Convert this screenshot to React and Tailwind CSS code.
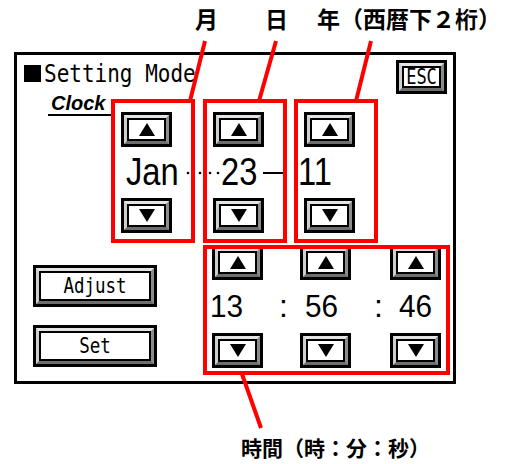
import React from 'react';

const mono = "font-['DejaVu_Sans_Mono',monospace]";
const narrow = "font-['Liberation_Sans',Arial,sans-serif]";
const cjk = "font-['Noto_Sans_CJK_JP',sans-serif]";

// double framed bevel button used all over the panel
const Bevel = ({ className = '', children }) => (
  <div className={`border-[3px] border-black ${className}`}>
    <div className="h-full border-[3px] border-t-[#e4e4e4] border-l-[#cfcfcf] border-r-[#8c8c8c] border-b-[#6e6e6e]">
      <div className="h-full border-2 border-black bg-white flex items-center justify-center">
        {children}
      </div>
    </div>
  </div>
);

const Tri = ({ down }) => (
  <svg width="16" height="13" viewBox="0 0 16 13">
    <polygon points={down ? '0,0 16,0 8,13' : '8,0 16,13 0,13'} fill="#000" />
  </svg>
);

const Arrow = ({ down }) => (
  <Bevel className="w-[51px] h-[35px]">
    <Tri down={down} />
  </Bevel>
);

const Label = ({ children }) => (
  <span className={`inline-block scale-y-[1.2] text-[17.5px] leading-[18px] ${mono}`}>{children}</span>
);

// narrow tall digits, squeezed from the left edge
const Big = ({ w, children }) => (
  <span className={`inline-block shrink-0 origin-left scale-x-[0.86] whitespace-nowrap ${w}`}>{children}</span>
);

const Clock = ({ children }) => (
  <span className="inline-block shrink-0 origin-left scale-x-[0.93] whitespace-nowrap w-[34px]">{children}</span>
);

const Panel = () => (
  <div className="w-[442px] h-[332px] border-[3px] border-black">
    {/* header */}
    <div className="h-[57px] flex justify-between">
      <div className="pl-[7px] pt-[9px]">
        <div className="flex items-start">
          <div className="w-[17px] h-[17px] mt-[1px] bg-black" />
          <span className={`ml-[3px] inline-block scale-y-[1.18] text-[21px] leading-[21px] ${mono}`}>Setting Mode</span>
        </div>
        <div className="mt-[7px] ml-[24px]">
          <span className="inline-block border-b-2 border-black pl-[3px] pr-[8px] pb-[1px] font-['Liberation_Sans',Arial,sans-serif] font-bold italic text-[20px] leading-[20px]">
            Clock
          </span>
        </div>
      </div>
      <Bevel className="w-[51px] h-[34px] mt-[5px] mr-[6px]">
        <span className={`inline-block scale-y-[1.25] text-[17px] leading-[17px] ${mono}`}>ESC</span>
      </Bevel>
    </div>

    {/* date */}
    <div className="pl-[104px] grid grid-cols-[92px_91px_51px]">
      <Arrow />
      <Arrow />
      <Arrow />
      <div className={`h-[51px] pl-[5px] flex items-center text-[38px] leading-[51px] ${narrow}`}>
        <Big w="w-[56px]">Jan</Big>
        <svg className="ml-[4px] shrink-0" width="34" height="6" viewBox="0 0 34 6">
          {[2, 14, 24, 32].map((x) => (
            <circle key={x} cx={x} cy="3" r="1.3" fill="#000" />
          ))}
        </svg>
      </div>
      <div className={`h-[51px] pl-[8px] flex items-center text-[38px] leading-[51px] ${narrow}`}>
        <Big w="w-[37px]">23</Big>
        <div className="ml-[5px] w-[24px] h-[2px] shrink-0 bg-black" />
      </div>
      <div className={`h-[51px] -ml-[6px] flex items-center text-[38px] leading-[51px] ${narrow}`}>
        <Big w="w-[30px]">11</Big>
      </div>
      <Arrow down />
      <Arrow down />
      <Arrow down />
    </div>

    {/* buttons + time */}
    <div className="flex">
      <div className="w-[195px] pl-[16px] pt-[32px] flex flex-col gap-[18px]">
        <Bevel className="w-[124px] h-[42px]">
          <Label>Adjust</Label>
        </Bevel>
        <Bevel className="w-[124px] h-[42px]">
          <Label>Set</Label>
        </Bevel>
      </div>
      <div className="pt-[12px] grid grid-cols-[88px_90px_51px]">
        <Arrow />
        <Arrow />
        <Arrow />
        <div className={`h-[53px] -ml-[2px] pr-[12px] flex justify-between text-[32px] leading-[53px] ${narrow}`}>
          <Clock>13</Clock>
          <span>:</span>
        </div>
        <div className={`h-[53px] pl-[5px] pr-[7px] flex justify-between text-[32px] leading-[53px] ${narrow}`}>
          <Clock>56</Clock>
          <span>:</span>
        </div>
        <div className={`h-[53px] pl-[9px] flex text-[32px] leading-[53px] ${narrow}`}>
          <Clock>46</Clock>
        </div>
        <Arrow down />
        <Arrow down />
        <Arrow down />
      </div>
    </div>
  </div>
);

export default function App() {
  return (
    <div className="relative w-[507px] h-[464px] bg-white overflow-hidden text-black">
      <div className="pt-[52px] pl-[14px]">
        <Panel />
      </div>

      {/* annotation layer */}
      <div className="absolute left-[111px] top-[99px] w-[84px] h-[144px] border-4 border-[#ff0000]" />
      <div className="absolute left-[203px] top-[99px] w-[84px] h-[144px] border-4 border-[#ff0000]" />
      <div className="absolute left-[294px] top-[99px] w-[84px] h-[144px] border-4 border-[#ff0000]" />
      <div className="absolute left-[203px] top-[245px] w-[247px] h-[130px] border-4 border-[#ff0000]" />

      <svg className="absolute inset-0 pointer-events-none" width="507" height="464">
        <g stroke="#ff0000" strokeWidth="4">
          <line x1="205" y1="41" x2="190" y2="101" />
          <line x1="276" y1="41" x2="259" y2="101" />
          <line x1="371" y1="41" x2="356" y2="101" />
          <line x1="242" y1="374" x2="261" y2="428" />
        </g>
      </svg>

      <div className={`absolute left-[195px] top-[7px] text-[23px] leading-[23px] font-bold ${cjk}`}>月</div>
      <div className={`absolute left-[265px] top-[7px] text-[23px] leading-[23px] font-bold ${cjk}`}>日</div>
      <div className={`absolute left-[317px] top-[7px] text-[23px] leading-[23px] font-bold ${cjk}`}>年（西暦下２桁）</div>
      <div className={`absolute left-[241px] top-[436px] text-[21px] leading-[22px] font-bold ${cjk}`}>時間（時：分：秒）</div>
    </div>
  );
}
